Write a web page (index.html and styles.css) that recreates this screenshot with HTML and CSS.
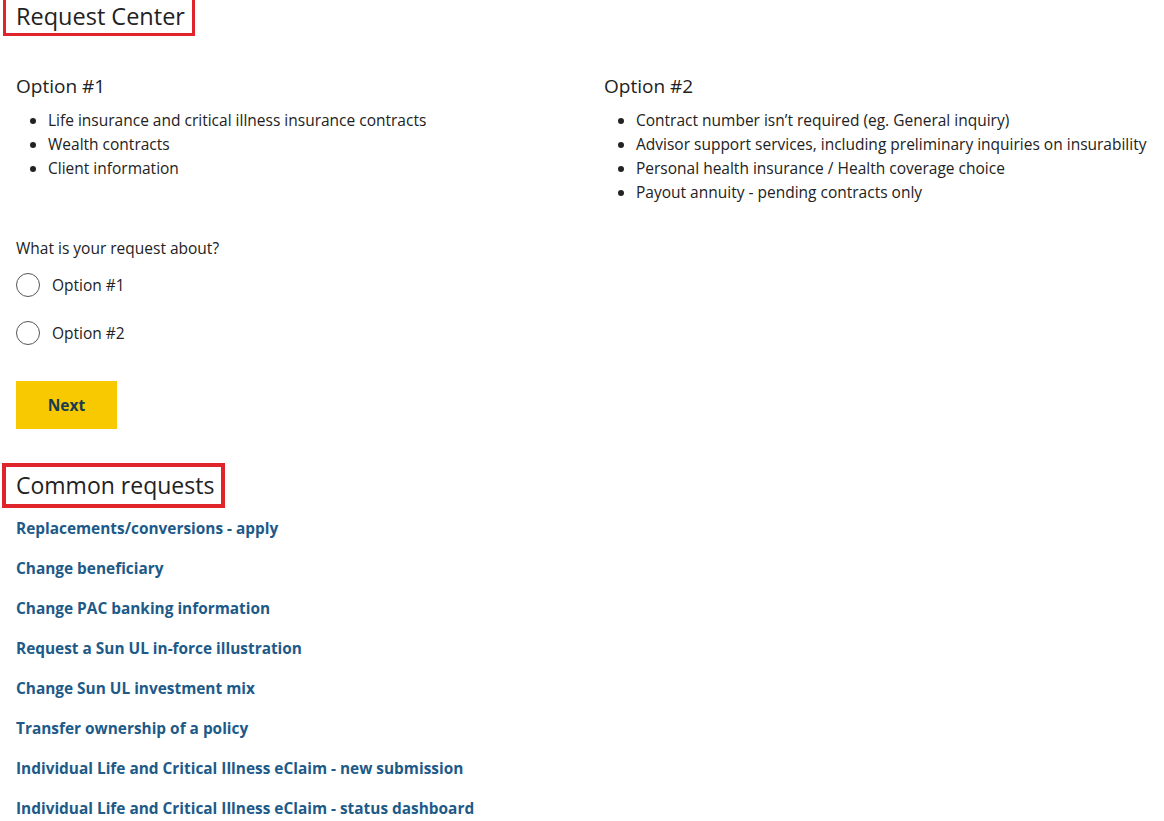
FILE: index.html
```html
<!DOCTYPE html>
<html>

<head>
  <link rel="stylesheet" href="styles.css">
</head>

<body>
  <div class="page">
    <h1 class="page-title boxed">Request Center</h1>

    <div class="options">
      <div class="option">
        <h2>Option #1</h2>
        <ul>
          <li>Life insurance and critical illness insurance contracts</li>
          <li>Wealth contracts</li>
          <li>Client information</li>
        </ul>
      </div>
      <div class="option">
        <h2>Option #2</h2>
        <ul>
          <li>Contract number isn’t required (eg. General inquiry)</li>
          <li>Advisor support services, including preliminary inquiries on insurability</li>
          <li>Personal health insurance / Health coverage choice</li>
          <li>Payout annuity - pending contracts only</li>
        </ul>
      </div>
    </div>

    <form class="request-form">
      <div class="question">What is your request about?</div>
      <label class="radio">
        <input type="radio" name="option">
        <span class="circle"></span>
        Option #1
      </label>
      <label class="radio">
        <input type="radio" name="option">
        <span class="circle"></span>
        Option #2
      </label>
      <button type="button" class="btn-next">Next</button>
    </form>

    <h2 class="section-title boxed">Common requests</h2>
    <!-- quick links -->
    <ul class="links">
      <li><a href="#">Replacements/conversions - apply</a></li>
      <li><a href="#">Change beneficiary</a></li>
      <li><a href="#">Change PAC banking information</a></li>
      <li><a href="#">Request a Sun UL in-force illustration</a></li>
      <li><a href="#">Change Sun UL investment mix</a></li>
      <li><a href="#">Transfer ownership of a policy</a></li>
      <li><a href="#">Individual Life and Critical Illness eClaim - new submission</a></li>
      <li><a href="#">Individual Life and Critical Illness eClaim - status dashboard</a></li>
    </ul>
  </div>
</body>

</html>
```

FILE: styles.css
```css
body {
  margin: 0;
  background-color: #fff;
  font-family: "Open Sans", Lato, Arial, sans-serif;
  color: #222;
  font-size: 15.5px;
}

.page {
  padding: 0 16px;
}

.page-title {
  font-size: 23.5px;
  font-weight: 400;
  line-height: 33px;
  margin: 0;
}

.section-title {
  font-size: 23px;
  font-weight: 400;
  line-height: 37px;
  margin: 34px 0 0;
}

/* highlight box around the headings */
.boxed {
  display: inline-block;
  border: 3px solid #e0242c;
  border-top-width: 0;
  margin-left: -13px;
  padding: 0 7px 0 10px;
}

.section-title.boxed {
  border-width: 4px;
  margin-left: -14px;
}

.options {
  display: grid;
  grid-template-columns: 588px 1fr;
  margin-top: 38px;
}

.option h2 {
  font-size: 19px;
  font-weight: 400;
  line-height: 24px;
  margin: 0 0 10px;
}

.option ul {
  margin: 0;
  padding-left: 32px;
}

.option li {
  line-height: 24px;
}

.request-form {
  margin-top: 32px;
}

.question {
  line-height: 24px;
  margin-bottom: 13px;
}

.radio {
  display: flex;
  align-items: center;
  gap: 12px;
  height: 24px;
  margin-bottom: 24px;
  cursor: pointer;
}

.radio input {
  display: none;
}

.circle {
  width: 24px;
  height: 24px;
  border: 1px solid #555;
  border-radius: 50%;
  box-sizing: border-box;
}

.btn-next {
  display: block;
  width: 101px;
  height: 48px;
  margin-top: 36px;
  border: none;
  background-color: #f8c800;
  color: #173c52;
  font-family: inherit;
  font-size: 15.5px;
  font-weight: 700;
}

.links {
  list-style: none;
  margin: 1px 0 0;
  padding: 0;
  font-size: 15.4px;
}

.links li {
  line-height: 40px;
}

.links a {
  color: #1d5a88;
  font-weight: 700;
  text-decoration: none;
}
```
